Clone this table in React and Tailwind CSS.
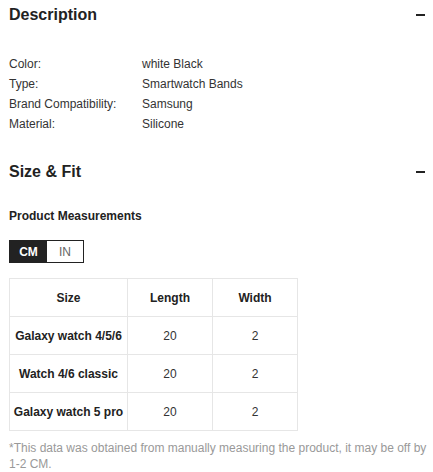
import React from "react";

const details = [
  ["Color:", "white Black"],
  ["Type:", "Smartwatch Bands"],
  ["Brand Compatibility:", "Samsung"],
  ["Material:", "Silicone"],
];

const sizes = [
  ["Galaxy watch 4/5/6", "20", "2"],
  ["Watch 4/6 classic", "20", "2"],
  ["Galaxy watch 5 pro", "20", "2"],
];

function SectionHeader({ title }) {
  return (
    <div className="flex h-[30px] items-center justify-between">
      <h2 className="text-[16px] font-bold text-[#222]">{title}</h2>
      <span className="mr-[3px] block h-[2px] w-[9px] bg-[#222]" />
    </div>
  );
}

export default function App() {
  return (
    <div
      className="bg-white pl-[9px] pr-[5px] text-[12px] text-[#333]"
      style={{ fontFamily: '"Liberation Sans", Arial, sans-serif' }}
    >
      <SectionHeader title="Description" />

      <div className="mt-[24px]">
        {details.map(([label, value]) => (
          <div key={label} className="flex leading-[20px]">
            <span className="w-[133px] shrink-0">{label}</span>
            <span>{value}</span>
          </div>
        ))}
      </div>

      <div className="mt-[23px]">
        <SectionHeader title="Size & Fit" />
      </div>

      <div className="mt-[21px] font-bold leading-[16px] text-[#222]">
        Product Measurements
      </div>

      <div className="mt-[16px] flex h-[23px] w-[75px] border border-[#222]">
        <button className="w-[37px] bg-[#222] text-[12px] font-bold text-white">
          CM
        </button>
        <button className="w-[36px] text-[12px] text-[#666]">IN</button>
      </div>

      <table className="mt-[15px] border-collapse text-center">
        <thead>
          <tr className="h-[38px]">
            <th className="w-[118px] border border-[#e6e6e6] font-bold text-[#222]">Size</th>
            <th className="w-[85px] border border-[#e6e6e6] font-bold text-[#222]">Length</th>
            <th className="w-[85px] border border-[#e6e6e6] font-bold text-[#222]">Width</th>
          </tr>
        </thead>
        <tbody>
          {sizes.map(([name, len, wid]) => (
            <tr key={name} className="h-[38px]">
              <td className="border border-[#e6e6e6] font-bold text-[#222]">{name}</td>
              <td className="border border-[#e6e6e6]">{len}</td>
              <td className="border border-[#e6e6e6]">{wid}</td>
            </tr>
          ))}
        </tbody>
      </table>

      <p className="mt-[9px] leading-[16px] text-[#999]">
        *This data was obtained from manually measuring the product, it may be off by 1-2 CM.
      </p>
    </div>
  );
}
